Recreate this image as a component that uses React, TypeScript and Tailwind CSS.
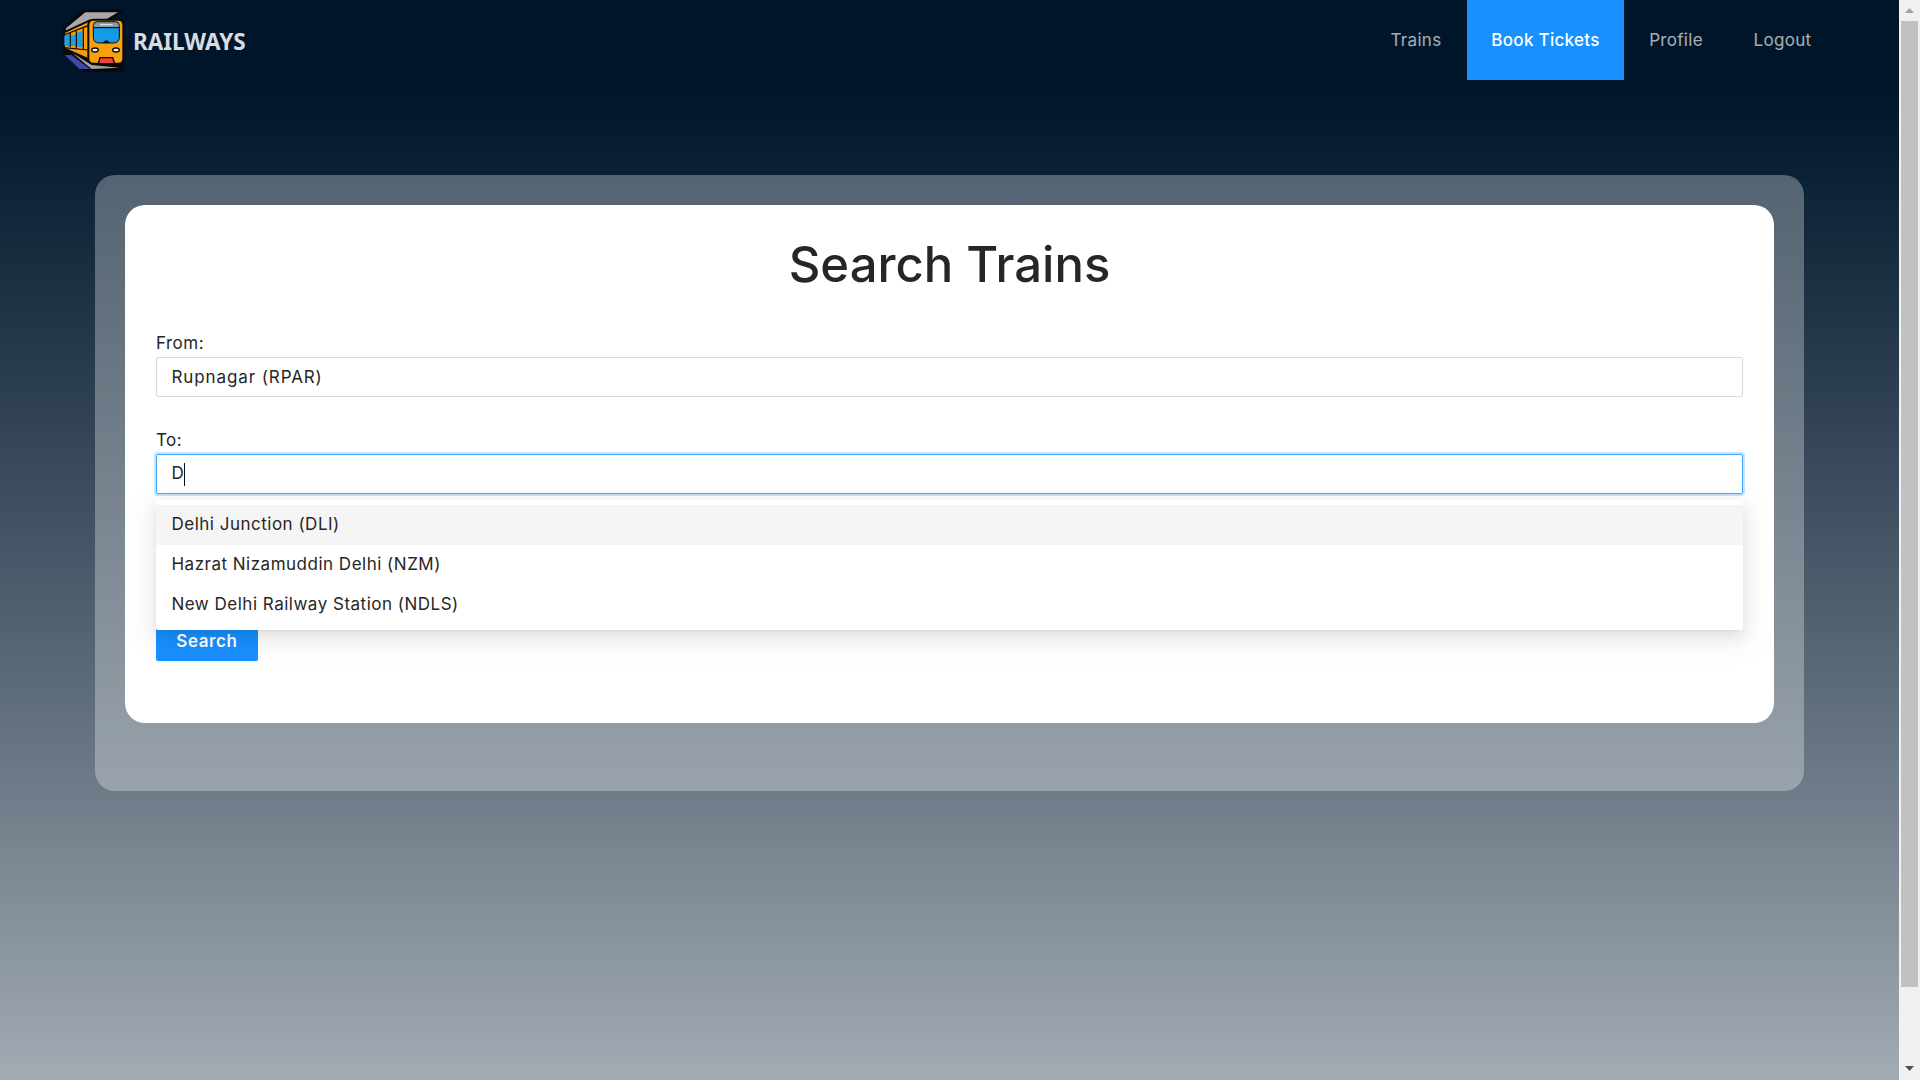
const font = "font-['Inter','Noto_Sans',sans-serif]";

function Logo() {
  return (
    <svg viewBox="0 0 210 210" className="w-[70px] h-[70px] shrink-0">
      {/* platform */}
      <path d="M12 145 L70 197 L190 197 L190 172 L85 172 L12 125 Z" fill="#0a0a0a" stroke="#0a0a0a" strokeWidth="6" strokeLinejoin="round" />
      <path d="M14 150 L58 192 L90 192 L34 150 Z" fill="#3f47a8" />
      <path d="M34 142 L95 180 L178 188 L95 192 L44 150 Z" fill="#a3a3a3" />
      {/* roof */}
      <path d="M12 68 L72 17 L188 17 L150 45 L90 48 L12 88 Z" fill="#0a0a0a" stroke="#0a0a0a" strokeWidth="5" strokeLinejoin="round" />
      <path d="M18 70 L76 22 L174 22 L140 42 L88 46 L18 80 Z" fill="#a8a8a8" />
      {/* side */}
      <path d="M12 82 L90 46 L90 165 L12 130 Z" fill="#f59e0b" stroke="#0a0a0a" strokeWidth="6" strokeLinejoin="round" />
      <path d="M13 92 L30 86 L30 126 L13 121 Z" fill="#1c9ee8" />
      <path d="M33 92 L48 88 L48 124 L33 122 Z" fill="#1c9ee8" />
      <path d="M50 84 L68 78 L68 128 L50 124 Z" fill="#1c9ee8" />
      <path d="M12 90 L84 62 M12 128 L84 135 M31 84 L31 126 M49 78 L49 130 M70 70 L70 132" stroke="#0a0a0a" strokeWidth="3.5" fill="none" />
      {/* front */}
      <rect x="85" y="44" width="105" height="132" rx="15" fill="#f7a10c" stroke="#0a0a0a" strokeWidth="6" />
      <path d="M100 62 Q100 50 112 50 L166 50 Q178 50 178 62 L178 68 L100 68 Z" fill="#8a99a6" stroke="#0a0a0a" strokeWidth="3" />
      <path d="M120 59 L158 59" stroke="#d6dde2" strokeWidth="4" />
      <path d="M100 68 L178 68 L178 96 Q178 114 160 114 L118 114 Q100 114 100 96 Z" fill="#149be8" stroke="#0a0a0a" strokeWidth="3" />
      <path d="M128 114 Q139 98 150 114 Z" fill="#0a0a0a" />
      <ellipse cx="105" cy="135" rx="10" ry="6" fill="#f3f3f3" stroke="#0a0a0a" strokeWidth="4" />
      <ellipse cx="168" cy="135" rx="10" ry="6" fill="#f3f3f3" stroke="#0a0a0a" strokeWidth="4" />
      <path d="M115 176 L120 158 L158 158 L164 176 Z" fill="#ef4444" stroke="#0a0a0a" strokeWidth="4" />
    </svg>
  );
}

function NavItem({ label, width, active }: { label: string; width: string; active?: boolean }) {
  return (
    <a className={`${width} h-20 flex items-center justify-center pt-[1px] text-[17px] tracking-[0.3px] ${active ? "bg-[#1890ff] text-white font-medium" : "text-white/65"}`}>
      {label}
    </a>
  );
}

function Field({ label, children }: { label: string; children: React.ReactNode }) {
  return (
    <div>
      <label className="block text-[17px] tracking-[0.5px] leading-6 mb-[2px] text-[#262626]">{label}</label>
      {children}
    </div>
  );
}

const options = ["Delhi Junction (DLI)", "Hazrat Nizamuddin Delhi (NZM)", "New Delhi Railway Station (NDLS)"];

export default function App() {
  return (
    <div className={`${font} h-screen flex overflow-hidden`}>
      <div className="flex-1 flex flex-col min-w-0">
        <header className="h-20 shrink-0 bg-[#001529] flex items-center justify-between pl-[60px] pr-[62px]">
          <div className="flex items-center gap-[3px]">
            <Logo />
            <span className="font-['Noto_Sans',sans-serif] font-bold text-[22.5px] pt-[4px] text-[#d8dce0]">RAILWAYS</span>
          </div>
          <nav className="flex">
            <NavItem label="Trains" width="w-[102px]" />
            <NavItem label="Book Tickets" width="w-[157px]" active />
            <NavItem label="Profile" width="w-[104px]" />
            <NavItem label="Logout" width="w-[109px]" />
          </nav>
        </header>

        <main className="flex-1 bg-linear-to-b from-[#001529] to-[#a3abb3] pt-[95px]">
          <div className="mx-auto w-[90%] rounded-[20px] bg-white/30 pt-[30px] px-[30px] pb-[68px]">
            <div className="bg-white rounded-[20px] px-[31px] pt-[24px] pb-[62px]">
              <h1 className="text-center text-[49px] leading-[72px] font-medium text-[#262626] mb-[30px]">Search Trains</h1>

              <Field label="From:">
                <input
                  readOnly
                  value="Rupnagar (RPAR)"
                  className="w-full h-10 border border-[#d9d9d9] rounded-[2px] px-[14.5px] text-[17px] tracking-[0.9px] text-[#262626] outline-none"
                />
              </Field>

              <div className="mt-[31px] relative">
                <Field label="To:">
                  <div className="h-10 border border-[#40a9ff] rounded-[2px] px-[14.5px] text-[17px] text-[#262626] flex items-center shadow-[0_0_0_2px_rgba(24,144,255,0.25)]">
                    D<span className="w-px h-[23px] bg-[#111]" />
                  </div>
                </Field>
                <ul className="absolute z-10 left-0 right-0 top-[72px] bg-white rounded-[2px] py-[5px] text-[17px] tracking-[0.5px] text-[#262626] shadow-[0_3px_6px_-4px_rgba(0,0,0,0.12),0_6px_16px_0_rgba(0,0,0,0.08),0_9px_28px_8px_rgba(0,0,0,0.05)]">
                  {options.map((o, i) => (
                    <li key={o} className={`h-10 flex items-center px-[15.5px] pb-[1px] ${i === 0 ? "bg-[#f5f5f5]" : ""}`}>
                      {o}
                    </li>
                  ))}
                </ul>
              </div>

              <button className="mt-[127px] block w-[102px] h-10 pt-[1px] bg-[#1890ff] rounded-[2px] text-white font-semibold text-[17px] tracking-[0.6px] shadow-[0_2px_0_rgba(0,0,0,0.045)]">
                Search
              </button>
            </div>
          </div>
        </main>
      </div>

      {/* scrollbar */}
      <div className="w-[21px] shrink-0 bg-[#f1f1f1] flex flex-col items-center">
        <div className="h-[21px] flex items-center justify-center">
          <svg width="9" height="5" viewBox="0 0 9 5"><path d="M4.5 0 L9 5 L0 5 Z" fill="#a3a3a3" /></svg>
        </div>
        <div className="w-[17px] h-[966px] bg-[#c1c1c1]" />
        <div className="flex-1 flex items-end pb-[9px]">
          <svg width="9" height="5" viewBox="0 0 9 5"><path d="M0 0 L9 0 L4.5 5 Z" fill="#505050" /></svg>
        </div>
      </div>
    </div>
  );
}
